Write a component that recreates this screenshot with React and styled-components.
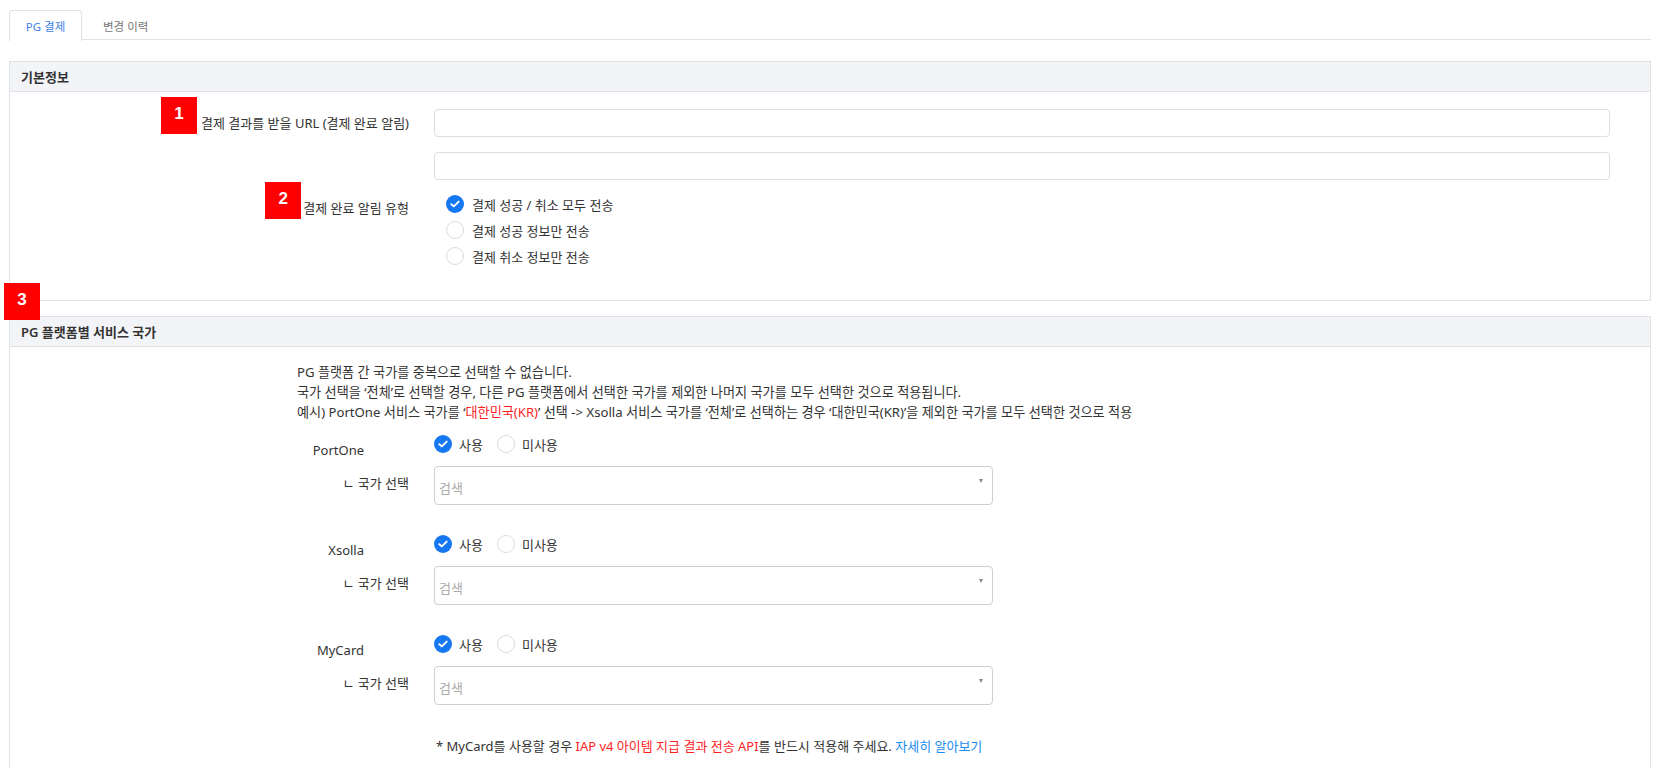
import React from "react";
import styled, { createGlobalStyle, css } from "styled-components";

const GlobalStyle = createGlobalStyle`
  html, body { margin: 0; padding: 0; background: #fff; }
  body {
    font-family: "Noto Sans", "Noto Sans CJK KR", sans-serif;
    color: #333;
    font-size: 13px;
  }
  * { box-sizing: border-box; }
`;

const Page = styled.div`
  padding: 10px 5px 0 9px;
`;

const Tabs = styled.div`
  display: flex;
  height: 30px;
  border-bottom: 1px solid #dfe1e5;
`;

const Tab = styled.div`
  height: 30px;
  padding: 0 20px;
  display: flex;
  align-items: center;
  font-size: 11.5px;
  color: #777;
  border: 1px solid transparent;
  border-bottom: none;
  border-radius: 4px 4px 0 0;
  ${(p) =>
    p.$active &&
    css`
      color: #3d7fe6;
      background: #fff;
      border-color: #dfe1e5;
      height: 31px;
      margin-bottom: -1px;
      width: 73px;
      justify-content: center;
      padding: 0;
    `}
`;

const Panel = styled.section`
  position: relative;
  border: 1px solid #e1e2e6;
  margin-top: ${(p) => p.$mt}px;
`;

const PanelHeader = styled.div`
  height: 30px;
  display: flex;
  align-items: center;
  padding-left: 11px;
  background: #f3f4f8;
  border-bottom: 1px solid #e1e2e6;
  font-size: 13px;
  font-weight: 600;
  color: #333;
`;

const Badge = styled.div`
  position: absolute;
  width: 36px;
  height: 37px;
  background: #ff0000;
  color: #fff;
  font-family: "Liberation Sans", Arial, sans-serif;
  font-weight: 700;
  font-size: 17px;
  display: flex;
  align-items: center;
  justify-content: center;
  padding-bottom: 3px;
  z-index: 2;
`;

const InlineBadge = styled(Badge)`
  right: calc(100% + ${(p) => p.$gap}px);
  bottom: -1px;
`;

const CornerBadge = styled(Badge)`
  left: -6px;
  top: -34px;
`;

const FormGrid = styled.div`
  display: grid;
  grid-template-columns: 399px 1fr;
  column-gap: 25px;
  row-gap: 15px;
  padding: 17px 40px 35px 0;
`;

const Label = styled.div`
  display: flex;
  justify-content: flex-end;
  align-items: ${(p) => (p.$top ? "flex-start" : "center")};
  padding-top: ${(p) => (p.$top ? 3 : 0)}px;
  line-height: 20px;
  font-size: 13px;
  white-space: nowrap;
`;

const LabelText = styled.span`
  position: relative;
`;

const TextInput = styled.input`
  display: block;
  width: 100%;
  height: 28px;
  border: 1px solid #dedede;
  border-radius: 4px;
  outline: none;
  background: #fff;
`;

const RadioList = styled.div`
  display: flex;
  flex-direction: ${(p) => (p.$row ? "row" : "column")};
  gap: ${(p) => (p.$row ? 14 : 8)}px;
  margin-left: ${(p) => p.$indent || 0}px;
`;

const RadioItem = styled.label`
  display: flex;
  align-items: center;
  height: 18px;
  gap: ${(p) => p.$gap || 8}px;
  font-size: 13px;
  color: #333;
  white-space: nowrap;
`;

const Circle = styled.span`
  width: 18px;
  height: 18px;
  border-radius: 50%;
  flex: none;
  display: flex;
  align-items: center;
  justify-content: center;
  ${(p) =>
    p.$checked
      ? css`
          background: #1677f2;
        `
      : css`
          background: #fff;
          border: 1px solid #dcdcdc;
        `}
`;

const Radio = ({ checked, children, gap }) => (
  <RadioItem $gap={gap}>
    <Circle $checked={checked}>
      {checked && (
        <svg width="10" height="8" viewBox="0 0 10 8">
          <polyline
            points="1.3,4.2 3.8,6.4 8.7,1.6"
            fill="none"
            stroke="#fff"
            strokeWidth="1.9"
            strokeLinecap="round"
            strokeLinejoin="round"
          />
        </svg>
      )}
    </Circle>
    {children}
  </RadioItem>
);

const CountryBody = styled.div`
  padding: 15px 0 40px 287px;
`;

const Notice = styled.div`
  font-size: 13.15px;
  line-height: 20px;
  color: #333;
  white-space: nowrap;
`;

const Red = styled.span`
  color: #ff1f1f;
`;

const Blue = styled.span`
  color: #1a8cf0;
`;

const PlatformGrid = styled.div`
  display: grid;
  grid-template-columns: 137px 559px;
  row-gap: 6px;
  margin-top: ${(p) => p.$mt}px;
`;

const PlatformName = styled.div`
  text-align: right;
  padding-right: 70px;
  padding-top: 9px;
  line-height: 20px;
  font-size: 13px;
`;

const RadioCell = styled.div`
  padding-top: 4px;
`;

const SubLabel = styled.div`
  text-align: right;
  padding-right: 25px;
  padding-top: 7px;
  line-height: 20px;
  font-size: 13px;
  white-space: nowrap;
`;

const SelectBox = styled.div`
  position: relative;
  height: 39px;
  border: 1px solid #cfcfcf;
  border-radius: 4px;
  padding: 11px 0 0 4px;
  font-size: 13px;
  line-height: 20px;
  color: #aaa;
  background: #fff;
`;

const Caret = styled.span`
  position: absolute;
  right: 9px;
  top: 12px;
  width: 0;
  height: 0;
  border-left: 2.5px solid transparent;
  border-right: 2.5px solid transparent;
  border-top: 4px solid #888;
`;

const Footnote = styled.div`
  margin: 31px 0 0 139px;
  font-size: 13px;
  line-height: 20px;
  white-space: nowrap;
`;

const platforms = ["PortOne", "Xsolla", "MyCard"];

export default function App() {
  return (
    <>
      <GlobalStyle />
      <Page>
        <Tabs>
          <Tab $active>PG 결제</Tab>
          <Tab>변경 이력</Tab>
        </Tabs>

        <Panel $mt={21}>
          <PanelHeader>기본정보</PanelHeader>
          <FormGrid>
            <Label>
              <LabelText>
                <InlineBadge $gap={4}>1</InlineBadge>
                결제 결과를 받을 URL (결제 완료 알림)
              </LabelText>
            </Label>
            <TextInput />
            <Label />
            <TextInput />
            <Label $top>
              <LabelText>
                <InlineBadge $gap={2}>2</InlineBadge>
                결제 완료 알림 유형
              </LabelText>
            </Label>
            <RadioList $indent={12}>
              <Radio checked>결제 성공 / 취소 모두 전송</Radio>
              <Radio>결제 성공 정보만 전송</Radio>
              <Radio>결제 취소 정보만 전송</Radio>
            </RadioList>
          </FormGrid>
        </Panel>

        <Panel $mt={15}>
          <CornerBadge>3</CornerBadge>
          <PanelHeader>PG 플랫폼별 서비스 국가</PanelHeader>
          <CountryBody>
            <Notice>PG 플랫폼 간 국가를 중복으로 선택할 수 없습니다.</Notice>
            <Notice>
              국가 선택을 ‘전체’로 선택할 경우, 다른 PG 플랫폼에서 선택한 국가를 제외한 나머지 국가를 모두 선택한 것으로 적용됩니다.
            </Notice>
            <Notice>
              예시) PortOne 서비스 국가를 ‘<Red>대한민국(KR)</Red>’ 선택 -&gt; Xsolla 서비스 국가를 ‘전체’로 선택하는 경우 ‘대한민국(KR)’을 제외한 국가를 모두 선택한 것으로 적용
            </Notice>

            {platforms.map((name, i) => (
              <PlatformGrid key={name} $mt={i === 0 ? 9 : 26}>
                <PlatformName>{name}</PlatformName>
                <RadioCell>
                  <RadioList $row>
                    <Radio checked gap={7}>
                      사용
                    </Radio>
                    <Radio gap={7}>미사용</Radio>
                  </RadioList>
                </RadioCell>
                <SubLabel>ㄴ 국가 선택</SubLabel>
                <SelectBox>
                  검색
                  <Caret />
                </SelectBox>
              </PlatformGrid>
            ))}

            <Footnote>
              * MyCard를 사용할 경우 <Red>IAP v4 아이템 지급 결과 전송 API</Red>를 반드시 적용해 주세요.{" "}
              <Blue>자세히 알아보기</Blue>
            </Footnote>
          </CountryBody>
        </Panel>
      </Page>
    </>
  );
}
